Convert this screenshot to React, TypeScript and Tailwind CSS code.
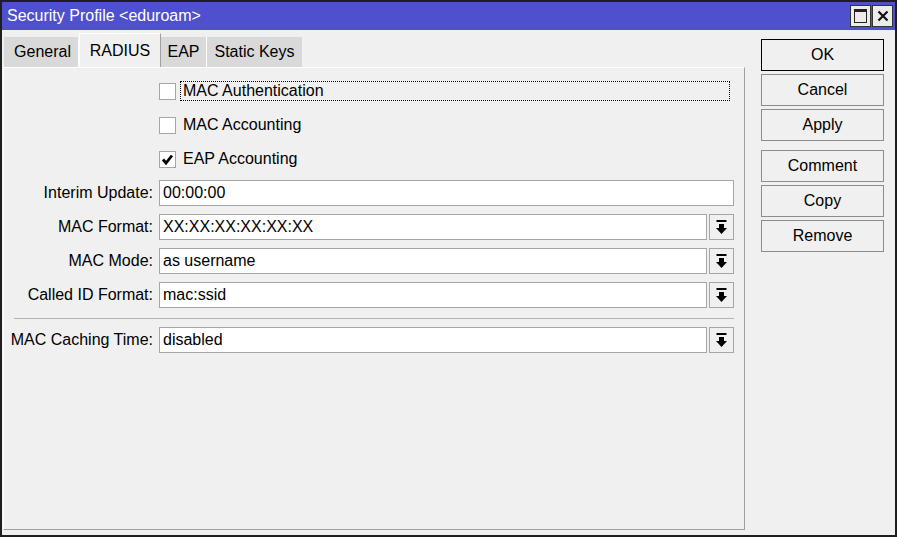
import React from "react";

const font = { fontFamily: "'Liberation Sans', Arial, sans-serif" };

function DropIcon() {
  return (
    <svg width="11" height="15" viewBox="0 0 11 15">
      <rect x="0.5" y="0" width="10" height="2" fill="#000" />
      <rect x="3" y="4" width="5" height="4" fill="#000" />
      <polygon points="0,8 11,8 5.5,14" fill="#000" />
    </svg>
  );
}

function Check({ checked, label, focused }: { checked?: boolean; label: string; focused?: boolean }) {
  return (
    <div className="flex h-[34px] items-center">
      <div className="w-[149px] shrink-0" />
      <div className="ml-[6px] flex h-[17px] w-[17px] shrink-0 items-center justify-center border border-[#a6a6a6] bg-white">
        {checked && (
          <svg width="13" height="13" viewBox="0 0 13 13">
            <path d="M2 6.5 L5 10 L11 2.5" fill="none" stroke="#000" strokeWidth="2.8" />
          </svg>
        )}
      </div>
      <div
        className={`ml-[4px] flex h-[20px] w-[550px] items-center pl-[2px] text-[16px] text-black ${focused ? "border border-dotted border-black" : "border border-transparent"}`}
      >
        {label}
      </div>
    </div>
  );
}

function Field({ label, value, drop }: { label: string; value: string; drop?: boolean }) {
  return (
    <div className="flex h-[34px] items-center">
      <div className="w-[149px] shrink-0 text-right text-[16px] text-black">{label}</div>
      <div className="ml-[6px] flex w-[575px] gap-[2px]">
        <div className="flex h-[26px] flex-1 items-center border border-[#a6a6a6] bg-white pl-[3px] text-[16px] text-black">
          {value}
        </div>
        {drop && (
          <div className="flex h-[26px] w-[25px] items-center justify-center border border-[#a6a6a6] bg-[#f0f0f0]">
            <DropIcon />
          </div>
        )}
      </div>
    </div>
  );
}

function Btn({ label, def }: { label: string; def?: boolean }) {
  return (
    <div
      className={`flex h-[32px] w-[123px] items-center justify-center border bg-[#f0f0f0] text-[16px] text-black ${def ? "border-black" : "border-[#8c8c8c]"}`}
    >
      {label}
    </div>
  );
}

export default function App() {
  return (
    <div className="flex h-[537px] w-[897px] flex-col border-2 border-[#1f1f1f] bg-[#f0f0f0]" style={font}>
      {/* title bar */}
      <div className="flex h-[28px] shrink-0 items-center justify-between bg-[#4f50cd] pl-[5px] pr-[2px]">
        <span className="text-[16px] text-white">Security Profile &lt;eduroam&gt;</span>
        <div className="flex gap-[1px]">
          <div className="flex h-[22px] w-[21px] items-center justify-center border border-[#333] bg-[#ececec]">
            <div className="h-[14px] w-[13px] border border-t-[3px] border-[#222]" />
          </div>
          <div className="flex h-[22px] w-[21px] items-center justify-center border border-[#333] bg-[#ececec]">
            <svg width="12" height="12" viewBox="0 0 12 12">
              <path d="M1.5 1.5 L10.5 10.5 M10.5 1.5 L1.5 10.5" stroke="#111" strokeWidth="2.2" />
            </svg>
          </div>
        </div>
      </div>

      <div className="flex flex-1">
        {/* left: tabs + panel */}
        <div className="flex w-[743px] flex-col pb-[5px]">
          <div className="flex h-[37px] items-end pl-[2px] pt-[3px] text-[16px] text-black">
            <div className="flex h-[30px] w-[75px] items-center justify-center border-r border-white bg-[#d9d9d9] pl-[3px]">General</div>
            <div className="flex h-[34px] w-[82px] items-center justify-center border-l border-t border-r border-l-white border-t-white border-r-[#a0a0a0] bg-[#f0f0f0]">
              RADIUS
            </div>
            <div className="flex h-[30px] w-[46px] items-center justify-center border-r border-white bg-[#d9d9d9]">EAP</div>
            <div className="flex h-[30px] w-[95px] items-center justify-center bg-[#d9d9d9]">Static Keys</div>
          </div>
          <div className="ml-[1px] flex flex-1 flex-col border-t border-l border-r border-b border-t-white border-l-white border-r-[#a0a0a0] border-b-[#a0a0a0] pt-[6px]">
            <Check label="MAC Authentication" focused />
            <Check label="MAC Accounting" />
            <Check label="EAP Accounting" checked />
            <Field label="Interim Update:" value="00:00:00" />
            <Field label="MAC Format:" value="XX:XX:XX:XX:XX:XX" drop />
            <Field label="MAC Mode:" value="as username" drop />
            <Field label="Called ID Format:" value="mac:ssid" drop />
            <div className="ml-[10px] mt-[6px] mb-[4px] h-px w-[720px] bg-[#b4b4b4]" />
            <Field label="MAC Caching Time:" value="disabled" drop />
          </div>
        </div>

        {/* right: buttons */}
        <div className="ml-[16px] flex flex-col gap-[3px] pt-[9px]">
          <Btn label="OK" def />
          <Btn label="Cancel" />
          <Btn label="Apply" />
          <div className="h-[3px]" />
          <Btn label="Comment" />
          <Btn label="Copy" />
          <Btn label="Remove" />
        </div>
      </div>
    </div>
  );
}
